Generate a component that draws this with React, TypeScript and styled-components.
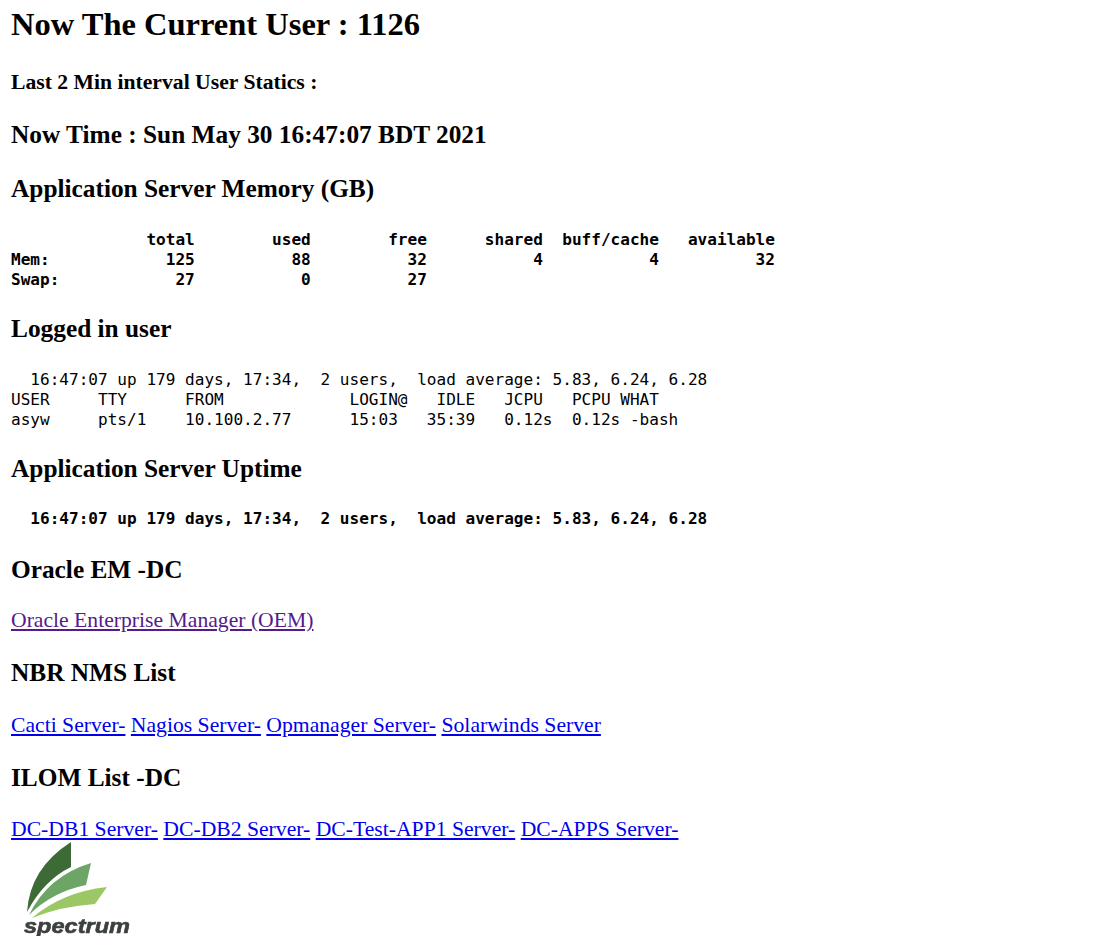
import React from 'react'
import styled, { createGlobalStyle } from 'styled-components'

const GlobalStyle = createGlobalStyle`
    html, body {
        margin: 0;
        padding: 0;
        background: #fff;
        color: #000;
    }
    body {
        font-family: "Liberation Serif", "Times New Roman", serif;
    }
`
const Page = styled.div`
    padding: 0 11px;
    height: 936px;
    overflow: hidden;
    box-sizing: border-box;
`
const Title = styled.h1`
    font-size: 32.5px;
    line-height: 36px;
    font-weight: bold;
    margin: 6px 0 0;
`
const SubTitle = styled.h3`
    font-size: 21.66px;
    line-height: 24px;
    font-weight: bold;
    margin: 28px 0 0;
`
const Heading = styled.h2<{ $top?: number }>`
    font-size: 25.33px;
    line-height: 28px;
    font-weight: bold;
    margin: ${(p) => p.$top ?? 25}px 0 0;
`
const Pre = styled.pre<{ $bold?: boolean; $top?: number }>`
    font-family: "DejaVu Sans Mono", "Liberation Mono", monospace;
    font-size: 16.07px;
    line-height: 20px;
    font-weight: ${(p) => (p.$bold ? 'bold' : 'normal')};
    margin: ${(p) => p.$top ?? 28}px 0 0;
`
const LinkRow = styled.p<{ $top?: number }>`
    font-size: 21.66px;
    line-height: 26px;
    margin: ${(p) => p.$top ?? 25}px 0 0;
`
const Anchor = styled.a<{ $visited?: boolean }>`
    color: ${(p) => (p.$visited ? '#551a8b' : '#0000ee')};
    text-decoration: underline;
`
const LogoWrap = styled.div`
    width: 112px;
    height: 94px;
    margin: 0 0 0 11px;
    filter: blur(0.35px);
`
const LogoText = styled.text`
    font-family: "Liberation Sans", Arial, sans-serif;
    font-size: 21px;
    font-weight: bold;
    font-style: italic;
    fill: #3d4040;
    stroke: #3d4040;
    stroke-width: 0.6px;
`

function Logo() {
    return (
        <LogoWrap>
            <svg width="112" height="96" viewBox="0 0 112 96">
                <path d="M49 0 L49 25 Q22 38 5 70 Q8 26 49 0Z" fill="#3d6b35" />
                <path d="M69 21 L64 43 Q30 50 7 73 Q26 34 69 21Z" fill="#6da566" />
                <path d="M85 45 L73 62 Q40 64 10 76 Q40 50 85 45Z" fill="#9bc764" />
                <LogoText x="2" y="91" textLength="106" lengthAdjust="spacingAndGlyphs">spectrum</LogoText>
            </svg>
        </LogoWrap>
    )
}

export default function App() {
    return (
        <Page>
            <GlobalStyle />
            <Title>Now The Current User : 1126</Title>
            <SubTitle>Last 2 Min interval User Statics :</SubTitle>
            <Heading $top={26}>Now Time : Sun May 30 16:47:07 BDT 2021</Heading>
            <Heading $top={26}>Application Server Memory (GB)</Heading>
            <Pre $bold>{`              total        used        free      shared  buff/cache   available
Mem:            125          88          32           4           4          32
Swap:            27           0          27`}</Pre>
            <Heading $top={24}>Logged in user</Heading>
            <Pre>{`  16:47:07 up 179 days, 17:34,  2 users,  load average: 5.83, 6.24, 6.28
USER     TTY      FROM             LOGIN@   IDLE   JCPU   PCPU WHAT
asyw     pts/1    10.100.2.77      15:03   35:39   0.12s  0.12s -bash`}</Pre>
            <Heading $top={24}>Application Server Uptime</Heading>
            <Pre $bold $top={27}>{`  16:47:07 up 179 days, 17:34,  2 users,  load average: 5.83, 6.24, 6.28`}</Pre>
            <Heading $top={26}>Oracle EM -DC</Heading>
            <LinkRow $top={24}>
                <Anchor href="#" $visited>Oracle Enterprise Manager (OEM)</Anchor>
            </LinkRow>
            <Heading>NBR NMS List</Heading>
            <LinkRow $top={26}>
                <Anchor href="#">Cacti Server-</Anchor> <Anchor href="#">Nagios Server-</Anchor>{' '}
                <Anchor href="#">Opmanager Server-</Anchor> <Anchor href="#">Solarwinds Server</Anchor>
            </LinkRow>
            <Heading>ILOM List -DC</Heading>
            <LinkRow>
                <Anchor href="#">DC-DB1 Server-</Anchor> <Anchor href="#">DC-DB2 Server-</Anchor>{' '}
                <Anchor href="#">DC-Test-APP1 Server-</Anchor> <Anchor href="#">DC-APPS Server-</Anchor>
            </LinkRow>
            <Logo />
        </Page>
    )
}
